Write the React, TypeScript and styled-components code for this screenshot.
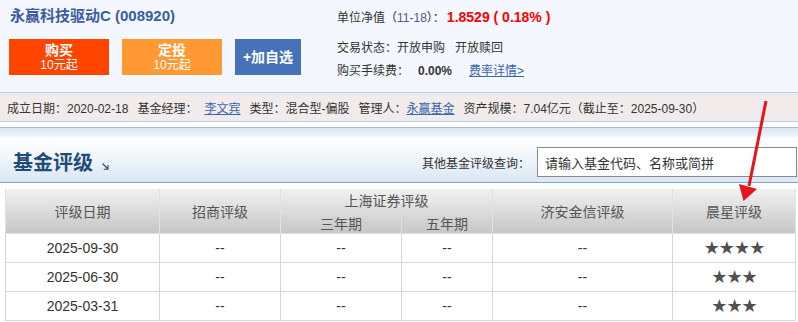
import React from 'react';
import styled, { createGlobalStyle } from 'styled-components';

const GlobalStyle = createGlobalStyle`
  html, body { margin: 0; padding: 0; background: #fff; }
  body {
    font-family: "Liberation Sans", Arial, "Noto Sans CJK SC", sans-serif;
    color: #333;
    font-size: 12px;
  }
`;

const Page = styled.div`
  position: relative;
  width: 798px;
  height: 322px;
  overflow: hidden;
  background: #fff;
`;

const Top = styled.div`
  display: flex;
  height: 92px;
  background: #f4f8fe;
`;

const LeftCol = styled.div`
  width: 337px;
  padding: 7px 0 0 9px;
  box-sizing: border-box;
`;

const Title = styled.div`
  font-size: 15px;
  font-weight: bold;
  line-height: 18px;
  color: #3a5d9f;
  margin-left: 1px;
`;

const ButtonRow = styled.div`
  display: flex;
  gap: 13px;
  margin-top: 14px;
`;

const ActionButton = styled.div<{ $bg: string; $w: number }>`
  width: ${(p) => p.$w}px;
  height: 36px;
  background: ${(p) => p.$bg};
  color: #fff;
  display: flex;
  flex-direction: column;
  align-items: center;
  justify-content: center;
  box-sizing: border-box;
`;

const BtnMain = styled.span`
  font-size: 14px;
  font-weight: bold;
  line-height: 15px;
`;

const BtnSub = styled.span`
  font-size: 12px;
  line-height: 14px;
`;

const RightCol = styled.div`
  padding-top: 8px;
`;

const InfoLine = styled.div<{ $mt: number }>`
  line-height: 18px;
  margin-top: ${(p) => p.$mt}px;
  white-space: nowrap;
  font-size: 12px;
  color: #333;
`;

const DateTag = styled.span`
  color: #5e5190;
`;

const RedValue = styled.span`
  color: #ff0000;
  font-weight: bold;
  font-size: 14px;
  margin-left: 2px;
`;

const Gap = styled.span<{ $w: number }>`
  display: inline-block;
  width: ${(p) => p.$w}px;
`;

const BoldNum = styled.span`
  font-weight: bold;
  color: #333;
`;

const Link = styled.a`
  color: #3a64ad;
  text-decoration: underline;
  cursor: pointer;
`;

const InfoBar = styled.div`
  height: 28px;
  background: #f1ebeb;
  border-top: 1px solid #b5cfe8;
  border-bottom: 1px solid #b5cfe8;
  display: flex;
  align-items: center;
  padding-left: 7px;
  white-space: nowrap;
  font-size: 12px;
  color: #333;
`;

const InfoItem = styled.span<{ $mr?: number }>`
  margin-right: ${(p) => (p.$mr ?? 9)}px;
`;

const SectionHead = styled.div`
  margin-top: 5px;
  height: 56px;
  border-top: 1px solid #a9bccd;
  border-bottom: 1px solid #7ea7c9;
  background: linear-gradient(#d9e6f2 0px, #e6eef7 6px, #ffffff 11px, #dae7f4 100%);
  display: flex;
  align-items: center;
  padding: 14px 0 0 13px;
  box-sizing: border-box;
`;

const HeadTitle = styled.h2`
  margin: 0;
  font-size: 20px;
  line-height: 28px;
  font-weight: bold;
  color: #1f4b77;
  font-family: "Noto Sans CJK SC", sans-serif;
`;

const MoreIcon = styled.svg`
  margin: 9px 0 0 9px;
  width: 7px;
  height: 7px;
`;

const SearchLabel = styled.span`
  margin-left: auto;
  font-size: 12px;
  color: #333;
  margin-right: 7px;
`;

const SearchInput = styled.div`
  width: 260px;
  height: 30px;
  box-sizing: border-box;
  border: 1px solid #8a8a8a;
  background: #fff;
  margin-right: 1px;
  display: flex;
  align-items: center;
  padding-left: 7px;
  font-size: 13px;
  color: #333;
`;

const Table = styled.table`
  border-collapse: collapse;
  table-layout: fixed;
  width: 790px;
  margin: 6px 0 0 5px;
  font-size: 14px;
`;

const THead = styled.thead`
  background: linear-gradient(#f1f1f1, #c5c5c5);
`;

const Th = styled.th<{ $h: number }>`
  height: ${(p) => p.$h}px;
  padding: 0;
  font-weight: normal;
  color: #555;
  border: 1px solid #e0e0e0;
  border-top: none;
  text-align: center;
  font-size: 14px;
`;

const Td = styled.td`
  height: 28px;
  padding: 0;
  border: 1px solid #d6d6d6;
  text-align: center;
  color: #333;
`;

const Stars = styled.span`
  font-family: "DejaVu Sans", sans-serif;
  font-size: 18px;
  line-height: 18px;
  color: #505050;
  letter-spacing: -1px;
`;

const Overlay = styled.svg`
  position: absolute;
  left: 0;
  top: 0;
  width: 798px;
  height: 322px;
  pointer-events: none;
`;

const rows = [
  { date: '2025-09-30', stars: 4 },
  { date: '2025-06-30', stars: 3 },
  { date: '2025-03-31', stars: 3 },
];

export default function App() {
  return (
    <Page>
      <GlobalStyle />
      <Top>
        <LeftCol>
          <Title>永赢科技驱动C (008920)</Title>
          <ButtonRow>
            <ActionButton $bg="#ff4400" $w={100}>
              <BtnMain>购买</BtnMain>
              <BtnSub>10元起</BtnSub>
            </ActionButton>
            <ActionButton $bg="#ff9933" $w={100}>
              <BtnMain>定投</BtnMain>
              <BtnSub>10元起</BtnSub>
            </ActionButton>
            <ActionButton $bg="#4672b9" $w={66}>
              <BtnMain>+加自选</BtnMain>
            </ActionButton>
          </ButtonRow>
        </LeftCol>
        <RightCol>
          <InfoLine $mt={0}>
            单位净值（<DateTag>11-18</DateTag>）：
            <RedValue>1.8529 ( 0.18% )</RedValue>
          </InfoLine>
          <InfoLine $mt={12}>
            交易状态：开放申购<Gap $w={10} />开放赎回
          </InfoLine>
          <InfoLine $mt={5}>
            购买手续费：<Gap $w={9} />
            <BoldNum>0.00%</BoldNum>
            <Gap $w={17} />
            <Link>费率详情&gt;</Link>
          </InfoLine>
        </RightCol>
      </Top>
      <InfoBar>
        <InfoItem>成立日期：2020-02-18</InfoItem>
        <InfoItem $mr={7}>基金经理：</InfoItem>
        <InfoItem>
          <Link>李文宾</Link>
        </InfoItem>
        <InfoItem>类型：混合型-偏股</InfoItem>
        <InfoItem $mr={0}>管理人：</InfoItem>
        <InfoItem>
          <Link>永赢基金</Link>
        </InfoItem>
        <InfoItem>资产规模：7.04亿元（截止至：2025-09-30）</InfoItem>
      </InfoBar>
      <SectionHead>
        <HeadTitle>基金评级</HeadTitle>
        <MoreIcon viewBox="0 0 7 7">
          <path d="M0.5 0.5 L6 6 M6 2 V6.2 H1.8" stroke="#1f4b77" strokeWidth="1.1" fill="none" />
        </MoreIcon>
        <SearchLabel>其他基金评级查询：</SearchLabel>
        <SearchInput>请输入基金代码、名称或简拼</SearchInput>
      </SectionHead>
      <Table>
        <colgroup>
          <col style={{ width: 154 }} />
          <col style={{ width: 121 }} />
          <col style={{ width: 121 }} />
          <col style={{ width: 91 }} />
          <col style={{ width: 180 }} />
          <col style={{ width: 123 }} />
        </colgroup>
        <THead>
          <tr>
            <Th $h={22} rowSpan={2}>评级日期</Th>
            <Th $h={22} rowSpan={2}>招商评级</Th>
            <Th $h={22} colSpan={2}>上海证券评级</Th>
            <Th $h={22} rowSpan={2}>济安金信评级</Th>
            <Th $h={22} rowSpan={2}>晨星评级</Th>
          </tr>
          <tr>
            <Th $h={21}>三年期</Th>
            <Th $h={21}>五年期</Th>
          </tr>
        </THead>
        <tbody>
          {rows.map((r) => (
            <tr key={r.date}>
              <Td>{r.date}</Td>
              <Td>--</Td>
              <Td>--</Td>
              <Td>--</Td>
              <Td>--</Td>
              <Td>
                <Stars>{'★'.repeat(r.stars)}</Stars>
              </Td>
            </tr>
          ))}
        </tbody>
      </Table>
      <Overlay viewBox="0 0 798 322">
        <line x1="766" y1="101" x2="749" y2="186" stroke="#e8141c" strokeWidth="3" />
        <polygon points="739,184 757,189 743.5,201" fill="#e8141c" />
      </Overlay>
    </Page>
  );
}
